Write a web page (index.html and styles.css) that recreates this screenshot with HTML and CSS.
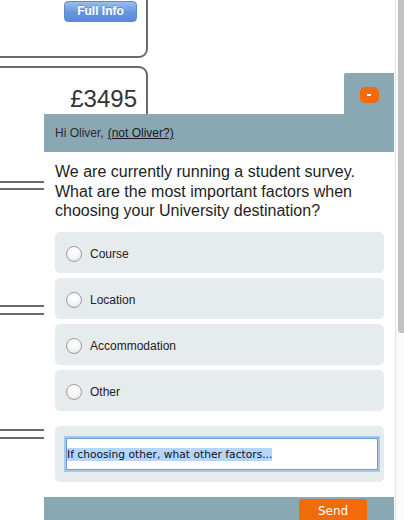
FILE: index.html
```html
<!DOCTYPE html>
<html>
<head>
<meta charset="utf-8">
<link rel="stylesheet" href="styles.css">
</head>
<body>
<div class="page">
  <div class="card card-1">
    <div class="card-actions"><span class="btn-info">Full Info</span></div>
  </div>
  <div class="card card-2"><div class="price">£3495</div></div>
  <div class="card card-3"></div>
  <div class="card card-4"></div>
  <div class="card card-5"></div>
</div>

<div class="widget">
  <div class="tab-row">
    <div class="tab"><span class="toggle"><span class="dash"></span></span></div>
  </div>
  <div class="w-header">Hi Oliver, <a class="not-you">(not Oliver?)</a></div>
  <div class="w-body">
    <p class="question">We are currently running a student survey. What are the most important factors when choosing your University destination?</p>
    <div class="options">
      <label class="option"><span class="radio"></span><span class="opt-label">Course</span></label>
      <label class="option"><span class="radio"></span><span class="opt-label">Location</span></label>
      <label class="option"><span class="radio"></span><span class="opt-label">Accommodation</span></label>
      <label class="option"><span class="radio"></span><span class="opt-label">Other</span></label>
    </div>
    <div class="other-box">
      <div class="other-input"><span class="sel">If choosing other, what other factors...</span></div>
    </div>
  </div>
  <div class="w-footer"><span class="send">Send</span></div>
</div>

<div class="scrollbar"><div class="thumb"></div></div>
</body>
</html>
```

FILE: styles.css
```css
html, body {
  margin: 0;
  padding: 0;
  height: 100%;
  overflow: hidden;
  background: #fff;
  font-family: "Liberation Sans", Arial, sans-serif;
  color: #222;
}

.page {
  display: flex;
  flex-direction: column;
  width: 168px;
  margin-left: -20px;
  height: 520px;
  overflow: hidden;
}

.card {
  box-sizing: border-box;
  flex-shrink: 0;
  border: 2px solid #6a6a6a;
  border-radius: 0 9px 9px 0;
}

.card-1 {
  margin-top: -50px;
  height: 108px;
  display: flex;
  flex-direction: column;
  align-items: flex-end;
  padding: 49px 9px 0 0;
}
.card-2 { margin-top: 8px; height: 117px; }
.card-3 { margin-top: 5px; height: 119px; }
.card-4 { margin-top: 6px; height: 118px; }
.card-5 { margin-top: 6px; height: 200px; }

.btn-info {
  display: inline-block;
  box-sizing: border-box;
  width: 73px;
  height: 21px;
  line-height: 19px;
  text-align: center;
  color: #fff;
  font-weight: bold;
  font-size: 12px;
  border: 1px solid #5f8ad0;
  border-radius: 4px;
  background: linear-gradient(#9dbdf0, #6795dd 55%, #5a8ad6);
  text-shadow: 0 -1px 0 rgba(40,70,130,0.35);
}

.price {
  text-align: right;
  padding: 16px 9px 0 0;
  font-size: 24px;
  line-height: 30px;
  color: #333;
}

/* floating survey widget */
.widget {
  position: absolute;
  left: 44px;
  top: 73px;
  width: 350px;
}

.tab-row {
  display: flex;
  justify-content: flex-end;
}

.tab {
  width: 50px;
  height: 41px;
  background: #8aa8b4;
  border-top-left-radius: 2px;
  display: flex;
  justify-content: center;
  padding-top: 14px;
  box-sizing: border-box;
}

.toggle {
  width: 19px;
  height: 16px;
  border-radius: 5px;
  background: #f26b0b;
  display: flex;
  align-items: center;
  justify-content: center;
}

.dash {
  width: 4px;
  height: 2px;
  background: #fff;
}

.w-header {
  height: 38px;
  background: #8aa8b4;
  padding-left: 11px;
  display: flex;
  align-items: center;
  font-size: 12px;
  color: #2a2a2a;
  gap: 4px;
}

.not-you {
  text-decoration: underline;
  color: #1a1a1a;
}

.w-body {
  background: #fff;
  padding: 10px 10px 15px 11px;
}

.question {
  margin: 0;
  font-size: 16px;
  line-height: 19.5px;
  color: #1e1e1e;
}

.options {
  margin-top: 11.5px;
  display: flex;
  flex-direction: column;
  gap: 5px;
}

.option {
  height: 41px;
  box-sizing: border-box;
  background: #e6ebee;
  border-radius: 5px;
  display: flex;
  align-items: center;
  padding: 2px 0 0 11px;
  gap: 8px;
}

.radio {
  width: 16px;
  height: 16px;
  box-sizing: border-box;
  border-radius: 50%;
  border: 1px solid #9c9c9c;
  background: radial-gradient(circle at 50% 35%, #ffffff 0%, #f7f7f7 45%, #dedede 100%);
  box-shadow: inset 0 1px 1px rgba(255,255,255,0.8);
}

.opt-label {
  font-size: 12px;
  color: #222;
}

.other-box {
  margin-top: 15px;
  height: 56px;
  box-sizing: border-box;
  background: #e6ebee;
  border-radius: 5px;
  padding: 12px 6px 12px 11px;
}

.other-input {
  height: 32px;
  box-sizing: border-box;
  background: #fff;
  border: 1px solid #6f9bd6;
  box-shadow: 0 0 0 2px #a9c6ec;
  display: flex;
  align-items: center;
  font-family: "DejaVu Sans", Verdana, sans-serif;
  font-size: 10.7px;
  color: #111;
}

.sel {
  background: #b4d5fe;
  line-height: 13px;
}

.w-footer {
  height: 23px;
  background: #8aa8b4;
  display: flex;
  justify-content: flex-end;
  padding: 2px 27px 0 0;
  box-sizing: border-box;
}

.send {
  width: 68px;
  height: 21px;
  background: #f26b0b;
  border-radius: 3px 3px 0 0;
  color: #fff;
  font-family: "DejaVu Sans", Verdana, sans-serif;
  font-size: 12px;
  line-height: 24px;
  text-align: center;
}

/* fake browser scrollbar */
.scrollbar {
  position: fixed;
  top: 0;
  right: 0;
  bottom: 0;
  width: 9px;
  box-sizing: border-box;
  border-left: 1px solid #e4e4e4;
  background: #fafafa;
  display: flex;
  justify-content: flex-end;
}

.thumb {
  width: 6px;
  height: 343px;
  margin-top: -10px;
  background: #c2c2c2;
  border-radius: 0 0 0 3px;
}
```
